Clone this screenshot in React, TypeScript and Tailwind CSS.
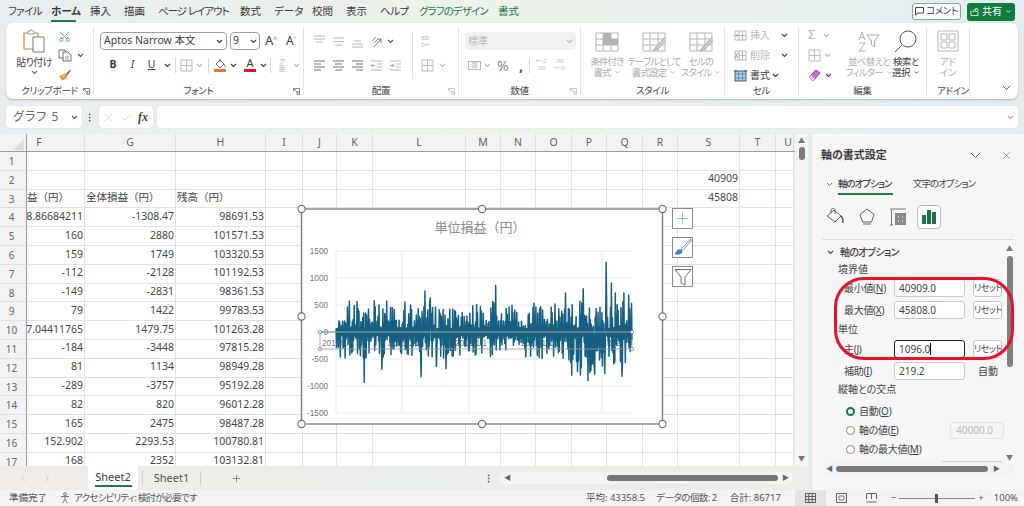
import type { ReactNode } from 'react';
import clsx from 'clsx';
import { X, Check, Plus, Scissors, MoreVertical, ChevronLeft, ChevronRight } from 'lucide-react';

const menus = [
  { label: 'ファイル', w: 'w-[29px]', t: 'tracking-[-0.6px]' },
  { label: 'ホーム', w: 'w-[25px]', active: true },
  { label: '挿入', w: 'w-[20px]' },
  { label: '描画', w: 'w-[20px]' },
  { label: 'ページ レイアウト', w: 'w-[68px]', t: 'tracking-[-1px]' },
  { label: '数式', w: 'w-[20px]' },
  { label: 'データ', w: 'w-[24px]' },
  { label: '校閲', w: 'w-[20px]' },
  { label: '表示', w: 'w-[20px]' },
  { label: 'ヘルプ', w: 'w-[25px]', t: 'tracking-[-0.5px]' },
  { label: 'グラフのデザイン', w: 'w-[65px]', green: true, t: 'tracking-[-0.9px]' },
  { label: '書式', w: 'w-[20px]', green: true },
];

const columns = [
  { k: 'F', w: 'w-[58px]' },
  { k: 'G', w: 'w-[91px]' },
  { k: 'H', w: 'w-[90px]' },
  { k: 'I', w: 'w-[37px]' },
  { k: 'J', w: 'w-[34px]' },
  { k: 'K', w: 'w-[36px]' },
  { k: 'L', w: 'w-[93px]' },
  { k: 'M', w: 'w-[35px]' },
  { k: 'N', w: 'w-[35px]' },
  { k: 'O', w: 'w-[36px]' },
  { k: 'P', w: 'w-[35px]' },
  { k: 'Q', w: 'w-[36px]' },
  { k: 'R', w: 'w-[35px]' },
  { k: 'S', w: 'w-[62px]' },
  { k: 'T', w: 'w-[36px]' },
  { k: 'U', w: 'w-[18px]' },
];

const rows: Record<string, string>[] = [
  {},
  { S: '40909' },
  { F: '損益（円）', G: '全体損益（円）', H: '残高（円）', S: '45808' },
  { F: '78.86684211', G: '-1308.47', H: '98691.53' },
  { F: '160', G: '2880', H: '101571.53' },
  { F: '159', G: '1749', H: '103320.53' },
  { F: '-112', G: '-2128', H: '101192.53' },
  { F: '-149', G: '-2831', H: '98361.53' },
  { F: '79', G: '1422', H: '99783.53' },
  { F: '87.04411765', G: '1479.75', H: '101263.28' },
  { F: '-184', G: '-3448', H: '97815.28' },
  { F: '81', G: '1134', H: '98949.28' },
  { F: '-289', G: '-3757', H: '95192.28' },
  { F: '82', G: '820', H: '96012.28' },
  { F: '165', G: '2475', H: '98487.28' },
  { F: '152.902', G: '2293.53', H: '100780.81' },
  { F: '168', G: '2352', H: '103132.81' },
];

function Chev({ className }: { className?: string }) {
  return (
    <svg width="7" height="5" viewBox="0 0 7 5" className={clsx('shrink-0', className)} fill="none" stroke="currentColor" strokeWidth="1.1">
      <path d="M1 1l2.5 2.5L6 1" />
    </svg>
  );
}

function Launcher({ dim }: { dim?: boolean }) {
  return (
    <svg width="7" height="7" viewBox="0 0 7 7" fill="none" stroke={dim ? '#c4c4c4' : '#707070'} strokeWidth="0.9">
      <path d="M0.5 3V0.5H6.5V6.5H4M1 1L5 5M5 3V5H3" />
    </svg>
  );
}

function Lines({ kind, color = '#6e6e6e' }: { kind: 'left' | 'center' | 'right' | 'top' | 'mid' | 'bottom'; color?: string }) {
  const paths = {
    left: 'M1 2H12M1 5H8M1 8H12M1 11H8',
    center: 'M1 2H12M3 5H10M1 8H12M3 11H10',
    right: 'M1 2H12M5 5H12M1 8H12M5 11H12',
    top: 'M1 1H12M1 4H12M3 7H10',
    mid: 'M1 3H12M1 6.5H12M3 10H10',
    bottom: 'M3 6H10M1 9H12M1 12H12',
  };
  return (
    <svg width="13" height="13" viewBox="0 0 13 13" fill="none" stroke={color} strokeWidth="1">
      <path d={paths[kind]} />
    </svg>
  );
}

function Indent({ flip }: { flip?: boolean }) {
  return (
    <svg width="13" height="13" viewBox="0 0 13 13" fill="none" stroke="#b8b8b8" strokeWidth="1">
      <path d="M1 2H12M7 5H12M7 8H12M1 11H12" />
      <path d={flip ? 'M1 6.5H5M3.5 5L5 6.5L3.5 8' : 'M5 6.5H1M2.5 5L1 6.5L2.5 8'} stroke="#8fa8b8" />
    </svg>
  );
}

function Group({ className, label, launcher, dimLauncher, children }: { className: string; label: string; launcher?: boolean; dimLauncher?: boolean; children: ReactNode }) {
  return (
    <div className={clsx('h-[68px] shrink-0 border-r border-[#e3e3e3] flex flex-col', className)}>
      <div className="h-[57px] shrink-0 flex">{children}</div>
      <div className="h-[14px] shrink-0 grid grid-cols-[10px_1fr_10px] items-center text-[9.5px] text-[#444]">
        <span />
        <span className="text-center whitespace-nowrap tracking-[-0.3px]">{label}</span>
        {launcher && <Launcher dim={dimLauncher} />}
      </div>
    </div>
  );
}

function PasteIcon() {
  return (
    <svg width="23" height="24" viewBox="0 0 23 24" fill="none">
      <path d="M1 4H15V20H1Z" fill="#fff" stroke="#cf8a3e" strokeWidth="1.2" />
      <path d="M5 4V2H7C7.5 0.5 9 0.5 9.5 2H11V5H5Z" fill="#fff" stroke="#9a9a9a" />
      <path d="M10 8H21V23H10Z" fill="#fff" stroke="#777" />
    </svg>
  );
}

function CopyIcon() {
  return (
    <svg width="14" height="13" viewBox="0 0 14 13" fill="none" stroke="#6c6c6c">
      <path d="M1 1H7V9H1Z" />
      <path d="M5 3H10L13 6V12H5Z" fill="#fff" />
      <path d="M7 8H11M7 10H11" strokeWidth="0.7" />
    </svg>
  );
}

function BrushIcon() {
  return (
    <svg width="14" height="13" viewBox="0 0 14 13">
      <path d="M7 7L12 1.5L13 2.5L9 8Z" fill="#777" />
      <path d="M1 8C3 7.5 5 6.5 6.5 5.5L9.5 8.5C8 10.5 6 12 4 12.5Z" fill="#e29a3c" />
      <path d="M4 9L6.5 7" stroke="#fbe3a8" />
    </svg>
  );
}

function BorderGrid({ color = '#bdbdbd' }: { color?: string }) {
  return (
    <svg width="13" height="13" viewBox="0 0 13 13" fill="none" stroke={color}>
      <path d="M1 1H12V12H1ZM1 6.5H12M6.5 1V12" />
    </svg>
  );
}

function FillIcon() {
  return (
    <svg width="14" height="14" viewBox="0 0 14 14" fill="none">
      <path d="M3 6L7 2L11 6L7 10Z" stroke="#6b6b6b" />
      <path d="M7 1V4" stroke="#6b6b6b" />
      <path d="M11 6C12 8 12.5 8.5 12 9.5" stroke="#3f87c9" />
      <rect x="1" y="11" width="12" height="3" fill="#e3772e" />
    </svg>
  );
}

function GridBtn({ brush, cond }: { brush?: boolean; cond?: boolean }) {
  return (
    <svg width="24" height="20" viewBox="0 0 24 20" fill="none" stroke="#b4b4b4">
      <path d="M1 1H23V19H1ZM1 7H23M1 13H23M8 1V19M16 1V19" />
      {cond && <path d="M8 1H16V7H23V13H8Z" fill="#b4b4b4" stroke="none" />}
      {brush && <path d="M23 5L14 15L11 19L16 17L25 7" fill="#cfcfcf" stroke="#a8a8a8" />}
    </svg>
  );
}

function CellIcon({ kind }: { kind: 'ins' | 'del' | 'fmt' }) {
  if (kind === 'fmt') {
    return (
      <svg width="13" height="13" viewBox="0 0 13 13" fill="none">
        <rect x="1" y="2" width="11" height="10" fill="#a9cdea" stroke="#5d5d5d" />
        <path d="M1 5H12M1 9H12M4.5 2V12M8.5 2V12" stroke="#5d7e97" strokeWidth="0.7" />
        <path d="M0 2H3M10 2H13" stroke="#2f7bd0" strokeWidth="1.4" />
      </svg>
    );
  }
  return (
    <svg width="13" height="11" viewBox="0 0 13 11" fill="none" stroke="#b8b8b8">
      <path d="M1 1H12V10H1ZM5 1V10M8.5 1V10M5 5.5H12" />
      <path d={kind === 'ins' ? 'M0.5 5.5H4M2.5 4L4 5.5L2.5 7' : 'M1 3L4 8M4 3L1 8'} stroke="#99a9b5" />
    </svg>
  );
}

function Ribbon() {
  return (
    <div className="mx-[6px] h-[76px] rounded-[7px] bg-white shadow-[0_1px_2px_rgba(0,0,0,0.22)] pt-[4px] flex text-[#3b3b3b]">
      <Group className="w-[88px]" label="クリップボード" launcher>
        <div className="w-[52px] flex flex-col items-center pl-[4px] pt-[2px]">
          <PasteIcon />
          <span className="text-[10px] leading-[12px] mt-[3px] tracking-[-0.6px] whitespace-nowrap">貼り付け</span>
          <Chev className="mt-[2px] text-[#666]" />
        </div>
        <div className="flex flex-col gap-[6px] pt-[3px]">
          <Scissors size={13} className="text-[#4a7fb5] rotate-[-90deg]" strokeWidth={1.4} />
          <div className="flex items-center gap-[3px]">
            <CopyIcon />
            <Chev className="text-[#555] ml-[2px]" />
          </div>
          <BrushIcon />
        </div>
      </Group>

      <Group className="w-[210px]" label="フォント" launcher>
        <div className="flex flex-col pl-[6px] pt-[5px] gap-[6px]">
          <div className="flex items-center h-[18px]">
            <div className="w-[127px] h-[18px] rounded-[4px] border border-[#9d9d9d] flex items-center justify-between px-[3px] text-[10.5px]">
              <span>Aptos Narrow 本文</span>
              <Chev />
            </div>
            <div className="w-[30px] h-[18px] ml-[3px] rounded-[4px] border border-[#9d9d9d] flex items-center justify-between px-[2px] text-[10.5px]">
              <span>9</span>
              <Chev />
            </div>
            <span className="ml-[5px] w-[16px] text-[13px]">A<sup className="text-[7px] text-[#2f7bd0]">^</sup></span>
            <span className="ml-[5px] w-[16px] text-[12px]">A<sup className="text-[7px] text-[#2f7bd0]">ˇ</sup></span>
          </div>
          <div className="flex items-center h-[18px] text-[10.5px]">
            <span className="w-[20px] ml-[3px] text-center font-bold">B</span>
            <span className="w-[19px] text-center italic">I</span>
            <span className="w-[19px] text-center underline">U</span>
            <Chev className="ml-[3px]" />
            <span className="w-px h-[15px] bg-[#d8d8d8] ml-[4px]" />
            <span className="ml-[4px]"><BorderGrid /></span>
            <Chev className="ml-[3px] text-[#bbb]" />
            <span className="w-px h-[15px] bg-[#d8d8d8] ml-[5px]" />
            <span className="ml-[4px]"><FillIcon /></span>
            <Chev className="ml-[3px]" />
            <span className="ml-[6px] w-[14px] flex flex-col items-center leading-[10px] text-[11px]">
              A
              <span className="w-[12px] h-[3px] bg-[#e81123] mt-[1px]" />
            </span>
            <Chev className="ml-[3px]" />
            <span className="w-px h-[15px] bg-[#d8d8d8] ml-[3px]" />
            <span className="ml-[5px] w-[12px] text-center text-[7px] leading-[7px] text-[#bbb]">ア<br />亜</span>
            <Chev className="ml-[5px] text-[#bbb]" />
          </div>
        </div>
      </Group>

      <Group className="w-[155px]" label="配置" launcher dimLauncher>
        <div className="flex pl-[9px] pt-[5px]">
          <div className="flex flex-col gap-[6px] w-[99px]">
            <div className="flex items-center h-[18px] gap-[6px]">
              <Lines kind="top" color="#b8b8b8" />
              <Lines kind="mid" color="#b8b8b8" />
              <Lines kind="bottom" color="#b8b8b8" />
              <svg width="13" height="13" viewBox="0 0 13 13" fill="none" stroke="#9a9a9a">
                <path d="M2 6L6 2M4 8L8 4" />
                <path d="M4 12L11 4M11 8V4H7" stroke="#3f87c9" />
              </svg>
              <Chev className="-ml-[2px] text-[#555]" />
            </div>
            <div className="flex items-center h-[18px] gap-[6px]">
              <Lines kind="left" />
              <Lines kind="center" />
              <Lines kind="right" />
              <Indent />
              <Indent flip />
            </div>
          </div>
          <div className="w-px h-[47px] bg-[#e0e0e0]" />
          <div className="flex flex-col gap-[6px] pl-[8px]">
            <div className="h-[18px] text-[7px] leading-[7px] text-[#b8b8b8] pt-[2px]">ab<br />c↵</div>
            <div className="flex items-center h-[18px] gap-[5px]">
              <BorderGrid />
              <Chev className="text-[#bbb]" />
            </div>
          </div>
        </div>
      </Group>

      <Group className="w-[122px]" label="数値" launcher dimLauncher>
        <div className="flex flex-col pl-[6px] pt-[5px] gap-[6px] text-[#b8b8b8]">
          <div className="w-[111px] h-[18px] rounded-[4px] bg-[#f0f0f0] flex items-center justify-between px-[3px] text-[10px]">
            <span>標準</span>
            <Chev />
          </div>
          <div className="flex items-center h-[18px]">
            <span className="ml-[3px] w-[13px] h-[9px] border border-[#b8b8b8] text-[6px] leading-[7px] text-center">圓</span>
            <Chev className="ml-[3px]" />
            <span className="ml-[6px] text-[14px] w-[14px] text-[#888]">%</span>
            <span className="ml-[8px] text-[15px] leading-[12px] font-bold text-[#555]">,</span>
            <span className="w-px h-[15px] bg-[#d8d8d8] ml-[6px]" />
            <span className="ml-[5px] text-[6px] leading-[7px] w-[12px] text-center">←.0<br />.00</span>
            <span className="ml-[6px] text-[6px] leading-[7px] w-[12px] text-center">.00<br />→.0</span>
          </div>
        </div>
      </Group>

      <Group className="w-[144px]" label="スタイル">
        <div className="flex text-[9.5px] leading-[11px] text-[#adadad] pt-[5px] pl-[3px]">
          {[
            { t: ['条件付き', '書式'], w: 'w-[46px]', cond: true },
            { t: ['テーブルとして', '書式設定'], w: 'w-[48px]', brush: true },
            { t: ['セルの', 'スタイル'], w: 'w-[46px]', brush: true },
          ].map((b) => (
            <div key={b.t[0]} className={clsx('flex flex-col items-center', b.w)}>
              <GridBtn cond={b.cond} brush={b.brush} />
              <span className="mt-[4px] whitespace-nowrap tracking-[-0.9px]">{b.t[0]}</span>
              <span className="whitespace-nowrap tracking-[-0.9px] flex items-center gap-[3px]">{b.t[1]}<Chev className="scale-75" /></span>
            </div>
          ))}
        </div>
      </Group>

      <Group className="w-[74px]" label="セル">
        <div className="flex flex-col pl-[9px] text-[10px] gap-[4px] w-full">
          <div className="flex items-center h-[16px] text-[#b8b8b8]">
            <CellIcon kind="ins" />
            <span className="ml-[3px]">挿入</span>
            <Chev className="ml-[11px] text-[#444]" />
          </div>
          <div className="flex items-center h-[16px] text-[#b8b8b8]">
            <CellIcon kind="del" />
            <span className="ml-[3px]">削除</span>
            <Chev className="ml-[11px] text-[#444]" />
          </div>
          <div className="flex items-center h-[16px]">
            <CellIcon kind="fmt" />
            <span className="ml-[3px]">書式</span>
            <Chev className="ml-[2px]" />
          </div>
        </div>
      </Group>

      <Group className="w-[128px]" label="編集">
        <div className="flex">
          <div className="w-[47px] pl-[9px] flex flex-col gap-[4px]">
            <div className="flex items-center h-[16px] text-[#b8b8b8] text-[13px]">Σ<Chev className="ml-[8px]" /></div>
            <div className="flex items-center h-[16px] text-[#b8b8b8]"><BorderGrid /><Chev className="ml-[3px]" /></div>
            <div className="flex items-center h-[16px]">
              <svg width="13" height="13" viewBox="0 0 13 13">
                <path d="M1 8L8 1L12 4L5 12Z" fill="#c86fd0" stroke="#9a3fa5" />
                <path d="M1 8L5 12L7 10L3 6Z" fill="#f0d0f4" />
              </svg>
              <Chev className="ml-[4px]" />
            </div>
          </div>
          <div className="w-[46px] flex flex-col items-center text-[9.5px] leading-[11px] text-[#adadad] pt-[3px]">
            <svg width="22" height="22" viewBox="0 0 22 22" fill="none" stroke="#a9a9a9">
              <path d="M1 10L4 2L7 10M2 7.5H6M1.5 13H7L1.5 21H7.5" strokeWidth="0.9" />
              <path d="M9 5H21L16.5 11V17L13.5 15V11Z" />
            </svg>
            <span className="mt-[4px] whitespace-nowrap tracking-[-0.7px]">並べ替えと</span>
            <span className="whitespace-nowrap tracking-[-0.9px] flex items-center gap-[3px]">フィルター<Chev className="scale-75" /></span>
          </div>
          <div className="w-[28px] flex flex-col items-center text-[9.5px] leading-[11px] pt-[3px]">
            <svg width="24" height="23" viewBox="0 0 24 23" fill="none" stroke="#555" className="shrink-0">
              <circle cx="14" cy="9" r="8" />
              <path d="M8 15L1 22" />
            </svg>
            <span className="mt-[3px] whitespace-nowrap tracking-[-0.5px]">検索と</span>
            <span className="whitespace-nowrap tracking-[-0.5px] flex items-center gap-[3px]">選択<Chev className="scale-75" /></span>
          </div>
        </div>
      </Group>

      <Group className="w-[43px]" label="アドイン">
        <div className="w-full flex flex-col items-center text-[9.5px] leading-[11px] text-[#adadad] pt-[3px]">
          <svg width="22" height="22" viewBox="0 0 22 22" fill="none" stroke="#b8b8b8" className="shrink-0">
            <path d="M1 1H21V21H1Z" />
            <path d="M4 4H10V10H4ZM12 4H18V10H12ZM4 12H10V18H4ZM12 12H18V18H12Z" />
          </svg>
          <span className="mt-[4px]">アド</span>
          <span>イン</span>
        </div>
      </Group>

      <div className="flex-1 flex items-end justify-end pr-[7px] pb-[8px] text-[#555]">
        <svg width="9" height="6" viewBox="0 0 9 6" fill="none" stroke="currentColor"><path d="M1 1L4.5 4.5L8 1" /></svg>
      </div>
    </div>
  );
}

// 単位損益のデータはシード付き乱数で作る
function makeSeries() {
  let seed = 20120101;
  const rnd = () => {
    seed = (seed + 0x6d2b79f5) | 0;
    let t = Math.imul(seed ^ (seed >>> 15), 1 | seed);
    t = (t + Math.imul(t ^ (t >>> 7), 61 | t)) ^ t;
    return ((t ^ (t >>> 14)) >>> 0) / 4294967296;
  };
  const n = 620;
  const spikes: Record<number, number> = {
    59: -930, 96: -690, 178: -830, 186: 760, 197: 630, 210: -640, 230: -680, 334: 860, 480: 720, 493: -800, 517: 800, 527: -900,
    562: -770, 565: 1290, 576: 910, 598: -820, 602: 720, 19: -480, 540: -650, 505: -730,
  };
  const pts: string[] = [];
  for (let i = 0; i < n; i++) {
    const t = i / (n - 1);
    const wide = t > 0.76 && t < 0.9 ? 1.8 : t > 0.93 ? 1.5 : 1;
    const up = (t < 0.03 ? 170 : 520) * (t > 0.93 ? 1.3 : 1);
    const down = 430 * wide;
    const r = Math.pow(rnd(), 1.9);
    const v = spikes[i] ?? (i % 2 === 0 ? up * r + 60 : -down * r - 60);
    pts.push(`${(336 + t * 296).toFixed(1)},${(332 - v * 0.054).toFixed(1)}`);
  }
  return pts.join(' ');
}

const series = makeSeries();

function Chart() {
  const hs = [1500, 1000, 500, 0, -500, -1000, -1500];
  const vs = [336, 402, 469, 535, 602];
  const xl = ['2012/1/1', '2015/1/1', '2018/1/1', '2021/1/1', '2024/1/2'];
  const handles = [
    [301.5, 209], [482, 209], [662.5, 209], [301.5, 316.5], [662.5, 316.5], [301.5, 424], [482, 424], [662.5, 424],
  ];
  return (
    <svg width="700" height="300" viewBox="290 200 400 230" className="absolute left-[290px] top-[66px] w-[400px] h-[230px]">
      <rect x="301.5" y="209" width="361" height="215" fill="#fff" stroke="#7f7f7f" strokeWidth="1.4" />
      <text x="480" y="232" textAnchor="middle" fontSize="13" fill="#8a8a8a" fontFamily="'Noto Sans CJK JP', sans-serif" className="[font-feature-settings:normal]">単位損益（円）</text>
      {hs.map((v) => (
        <g key={v}>
          <line x1="336" x2="632" y1={332 - v * 0.054} y2={332 - v * 0.054} stroke="#e4e4e4" strokeWidth="0.8" />
          <text x="328" y={335 - v * 0.054} textAnchor="end" fontSize="8.2" fill="#777" fontFamily="'Liberation Sans', sans-serif">{v}</text>
        </g>
      ))}
      {vs.map((x) => (
        <line key={x} x1={x} x2={x} y1="251" y2="413" stroke="#e4e4e4" strokeWidth="0.8" />
      ))}
      {xl.map((t, i) => (
        <text key={t} x={vs[i] + 2} y="346" textAnchor="middle" fontSize="8.2" fill="#777" fontFamily="'Liberation Sans', sans-serif">{t}</text>
      ))}
      <polyline points={series} fill="none" stroke="#156082" strokeWidth="1.5" strokeLinejoin="round" />
      <line x1="320" x2="632" y1="332" y2="332" stroke="#858585" strokeWidth="0.9" />
      <rect x="320" y="332" width="312" height="17" fill="none" stroke="#9a9a9a" strokeWidth="0.8" />
      {[[320, 332], [632, 332], [320, 349], [632, 349]].map(([x, y]) => (
        <circle key={`${x}-${y}`} cx={x} cy={y} r="1.6" fill="#fff" stroke="#3f87c9" strokeWidth="0.8" />
      ))}
      {handles.map(([x, y]) => (
        <circle key={`${x}-${y}`} cx={x} cy={y} r="3.6" fill="#fff" stroke="#6e6e6e" strokeWidth="1.1" />
      ))}
    </svg>
  );
}

function ChartButtons() {
  return (
    <div className="absolute left-[672px] top-[74px] flex flex-col gap-[8px]">
      <div className="w-[21px] h-[21px] border border-[#8a8a8a] bg-white flex items-center justify-center">
        <Plus size={19} strokeWidth={0.9} className="text-[#5cb578]" />
      </div>
      <div className="w-[21px] h-[21px] border border-[#8a8a8a] bg-white flex items-center justify-center">
        <svg width="19" height="19" viewBox="0 0 19 19" fill="none">
          <path d="M18 1L9 10L7.5 13L10.5 11.5L18 3Z" fill="#fff" stroke="#777" strokeWidth="0.8" />
          <path d="M7 11C4 11 4 14 1 16C4 17.5 9 17 9.5 13Z" fill="#3f87c9" />
        </svg>
      </div>
      <div className="w-[21px] h-[21px] border border-[#8a8a8a] bg-white flex items-center justify-center">
        <svg width="18" height="18" viewBox="0 0 18 18" fill="none" stroke="#6e6e6e">
          <path d="M1 1.5H17L11 9V17L7 15V9Z" />
        </svg>
      </div>
    </div>
  );
}

function Sheet() {
  return (
    <div className="relative flex-1 min-h-0 overflow-hidden flex">
      <div className="w-[795px] shrink-0 flex flex-col">
        <div className="flex h-[18px] shrink-0 bg-[#f2f2f2] border-b border-[#9c9c9c] text-[10.5px] text-[#666]">
          <div className="w-[27px] shrink-0 border-r border-[#9c9c9c] flex items-end justify-end pr-[2px] pb-[1px]">
            <span className="w-0 h-0 border-l-[11px] border-l-transparent border-b-[11px] border-b-[#dcdcdc]" />
          </div>
          {columns.map((c) => (
            <div
              key={c.k}
              className={clsx('shrink-0 border-r border-[#dedede] flex items-center justify-center', c.w, c.k === 'F' && 'pr-[33px]', c.k === 'U' && 'justify-end pr-[1px]')}
            >
              {c.k}
            </div>
          ))}
        </div>
        <div className="relative">
          {rows.map((row, i) => (
            <div key={i} className="flex h-[18.8px]">
              <div className="w-[27px] shrink-0 bg-[#f2f2f2] border-r border-[#9c9c9c] border-b border-b-[#dedede] text-[10px] text-[#666] text-center pr-[3px] leading-[18px]">
                {i + 1}
              </div>
              {columns.map((c) => {
                const val = row[c.k];
                const isText = i === 2;
                return (
                  <div
                    key={c.k}
                    className={clsx(
                      'shrink-0 bg-white border-r border-b border-[#e3e3e3] flex items-center overflow-hidden whitespace-nowrap text-[10.5px] text-[#444] pb-[1px] [font-feature-settings:normal]',
                      c.w,
                      isText && c.k !== 'F' && c.k !== 'S' ? 'justify-start pl-[1px]' : 'justify-end pr-[1px]',
                      isText && c.k === 'F' && 'pr-[15px]',
                    )}
                  >
                    {val}
                  </div>
                );
              })}
            </div>
          ))}
        </div>
      </div>
      <div className="w-[13px] shrink-0 bg-[#f5f5f5] flex flex-col items-center justify-between py-[3px] text-[#777] text-[7px] leading-[8px]">
        <div className="flex flex-col items-center">
          <span>▲</span>
          <span className="w-[6px] h-[13px] mt-[2px] rounded-full bg-[#7a7a7a]" />
        </div>
        <span>▼</span>
      </div>
      <Chart />
      <ChartButtons />
    </div>
  );
}

function Tabs() {
  return (
    <div className="h-[24px] shrink-0 flex items-center text-[11px] text-[#555] bg-gradient-to-r from-[#f0ebe6] via-[#e9edea] to-[#eeece6]">
      <span className="w-[88px] shrink-0 flex justify-start pl-[17px] gap-[12px] text-[#aaa]">
        <ChevronLeft size={12} strokeWidth={1.3} />
        <ChevronRight size={12} strokeWidth={1.3} />
      </span>
      <div className="w-[50px] h-[24px] bg-white rounded-b-[3px] text-[#3b3b3b] text-center relative pt-[3px]">
        Sheet2
        <span className="absolute left-[7px] right-[6px] top-[19px] h-[2px] bg-[#217a4a]" />
      </div>
      <span className="w-px h-[14px] bg-[#ccc] ml-[4px]" />
      <span className="w-[57px] text-center">Sheet1</span>
      <span className="w-px h-[14px] bg-[#ccc]" />
      <Plus size={11} className="ml-[30px]" strokeWidth={1.3} />
      <MoreVertical size={11} className="ml-[241px]" strokeWidth={1.8} />
      <div className="ml-[6px] w-[293px] h-[12px] rounded-full bg-[#f3f3f3] flex items-center justify-between px-[4px] text-[7px] text-[#666]">
        <span>◀</span>
        <span className="w-[171px] h-[6px] ml-[92px] rounded-full bg-[#757575]" />
        <span>▶</span>
      </div>
    </div>
  );
}

function PanelIcons() {
  return (
    <div className="flex items-center h-[25px] mt-[10px] pl-[14px]">
      <svg width="19" height="19" viewBox="0 0 19 19" fill="none" stroke="#5f5f5f">
        <path d="M1 9L8 3L15 9L9 15Z" />
        <path d="M5 6V3C5 1 9 1 9 3V7" />
        <path d="M15 9C17 11 17.5 13 16.5 16" stroke="#555" strokeWidth="1.6" />
      </svg>
      <svg width="18" height="18" viewBox="0 0 18 18" fill="none" stroke="#5f5f5f" className="ml-[13px]">
        <path d="M9 1L16 6.5L13.5 14H4.5L2 6.5Z" />
        <path d="M5 16H13" strokeWidth="1.5" stroke="#999" />
      </svg>
      <svg width="18" height="18" viewBox="0 0 18 18" fill="none" stroke="#777" className="ml-[13px]">
        <path d="M1 1H17M1 17H4M2.5 1V17" />
        <rect x="6" y="5" width="11" height="12" fill="#8a8a8a" stroke="none" />
        <path d="M9 9H10M13 9H14M9 13H10M13 13H14" stroke="#fff" />
      </svg>
      <div className="ml-[10px] w-[24px] h-[24px] rounded-[4px] bg-white border border-[#bdbdbd] flex items-end justify-center gap-[1px] pb-[4px]">
        <span className="w-[4px] h-[9px] bg-[#217346]" />
        <span className="w-[4px] h-[14px] bg-[#217346]" />
        <span className="w-[4px] h-[12px] bg-[#217346]" />
      </div>
    </div>
  );
}

function FieldRow({ label, value, reset, focus, after }: { label: ReactNode; value: string; reset?: boolean; focus?: boolean; after?: string }) {
  return (
    <div className="flex items-center h-[18px]">
      <span className="w-[50px] text-[10px] tracking-[-0.3px] whitespace-nowrap">{label}</span>
      <div className={clsx('w-[71px] h-[18px] rounded-[3px] bg-white px-[4px] flex items-center text-[10px]', focus ? 'border-[1.5px] border-[#222]' : 'border border-[#c9c9c9]')}>
        {value}
        {focus && <span className="w-px h-[12px] bg-black" />}
      </div>
      {reset && <span className="ml-[8px] w-[29px] h-[18px] shrink-0 rounded-[3px] bg-white border border-[#c9c9c9] text-center text-[9px] tracking-[-0.6px] leading-[16px] whitespace-nowrap">リセット</span>}
      {after && <span className="ml-[13px] text-[10px]">{after}</span>}
    </div>
  );
}

function Radio({ on, label, u }: { on?: boolean; label: string; u: string }) {
  return (
    <div className="flex items-center h-[19px] pl-[34px] text-[10px] tracking-[-0.3px]">
      <span className={clsx('w-[9px] h-[9px] rounded-full bg-white', on ? 'border-[2.5px] border-[#107c41]' : 'border border-[#888]')} />
      <span className="ml-[4px]">{label}(<u>{u}</u>)</span>
    </div>
  );
}

function Panel() {
  return (
    <div className="relative w-[213px] ml-[3px] shrink-0 bg-[#f6f6f6] border-l border-[#e0e0e0] text-[#444] flex flex-col overflow-hidden">
      <div className="flex items-center h-[20px] mt-[11px] pl-[9px] pr-[12px]">
        <span className="text-[11px] font-bold text-[#3b3b3b]">軸の書式設定</span>
        <svg width="11" height="7" viewBox="0 0 11 7" fill="none" stroke="#666" className="ml-auto mr-[20px]"><path d="M1 1L5.5 5.5L10 1" /></svg>
        <X size={11} className="text-[#666]" strokeWidth={1.4} />
      </div>
      <div className="flex h-[20px] mt-[9px] pl-[14px] text-[9.5px] tracking-[-1px] items-center">
        <svg width="7" height="5" viewBox="0 0 7 5" fill="none" stroke="#3f87c9" className="mr-[5px]"><path d="M1 1l2.5 2.5L6 1" /></svg>
        <span className="relative w-[55px] whitespace-nowrap font-medium">
          軸のオプション
          <span className="absolute left-0 right-0 top-[16px] h-[2px] bg-[#217a4a]" />
        </span>
        <span className="ml-[20px] whitespace-nowrap">文字のオプション</span>
      </div>
      <PanelIcons />
      <div className="mx-[10px] mt-[10px] h-px bg-[#dcdcdc]" />
      <div className="flex-1 min-h-0 flex">
        <div className="w-[192px] shrink-0 overflow-hidden">
          <div className="flex items-center h-[18px] mt-[3px] pl-[15px] text-[10px] font-medium tracking-[-0.7px]">
            <Chev className="mr-[6px]" />
            軸のオプション
          </div>
          <div className="pl-[26px] h-[17px] text-[10px] leading-[17px]">境界値</div>
          <div className="flex flex-col gap-[4px] pl-[32px] mt-[1px]">
            <FieldRow label={<>最小値(<u>N</u>)</>} value="40909.0" reset />
            <FieldRow label={<>最大値(<u>X</u>)</>} value="45808.0" reset />
          </div>
          <div className="pl-[26px] h-[21px] text-[10px] leading-[20px]">単位</div>
          <div className="flex flex-col gap-[4px] pl-[32px]">
            <FieldRow label={<>主(<u>J</u>)</>} value="1096.0" reset focus />
            <FieldRow label={<>補助(<u>I</u>)</>} value="219.2" after="自動" />
          </div>
          <div className="pl-[26px] h-[19px] text-[10px] leading-[19px]">縦軸との交点</div>
          <div className="mt-[3px]">
            <Radio on label="自動" u="O" />
            <div className="relative">
              <Radio label="軸の値" u="E" />
              <span className="absolute left-[138px] top-[1px] w-[54px] h-[17px] bg-[#f4f4f4] border border-[#e2e2e2] rounded-[3px] text-[10px] text-[#bbb] pl-[5px] leading-[15px]">40000.0</span>
            </div>
            <Radio label="軸の最大値" u="M" />
            <div className="ml-[128px] mt-[2px] w-[64px] h-[8px] rounded-t-[3px] border border-[#d0d0d0] bg-white" />
          </div>
        </div>
        <div className="w-[11px] shrink-0 flex flex-col items-center text-[7px] leading-[8px] text-[#777] pt-[5px] justify-between">
          <div className="flex flex-col items-center">
            <span>▲</span>
            <span className="w-[6px] h-[111px] mt-[3px] rounded-full bg-[#7f7f7f]" />
          </div>
          <span>▼</span>
        </div>
      </div>
      <div className="h-[14px] mb-[14px] mx-[11px] shrink-0 rounded-full bg-[#f2f2f2] flex items-center pl-[3px] text-[7px] text-[#666]">
        <span>◀</span>
        <span className="ml-[3px] w-[152px] h-[6px] rounded-full bg-[#7a7a7a]" />
        <span className="ml-[5px]">▶</span>
      </div>
      <div className="absolute left-[22px] top-[143px] w-[180px] h-[83px] rounded-[30px] border-[3px] border-[#e8112a]" />
    </div>
  );
}

function StatusBar() {
  return (
    <div className="h-[16px] shrink-0 bg-[#f3f3f3] flex items-center text-[9.5px] text-[#555]">
      <span className="ml-[9px]">準備完了</span>
      <svg width="11" height="12" viewBox="0 0 11 12" fill="none" stroke="#666" strokeWidth="0.9" className="ml-[13px]">
        <circle cx="5" cy="2.2" r="1.4" />
        <path d="M1 4.5H9M5 4.5V7.5M5 7.5L2.5 11M5 7.5L7.5 11" />
      </svg>
      <span className="ml-[3px] whitespace-nowrap tracking-[-0.8px]">アクセシビリティ: 検討が必要です</span>
      <span className="ml-auto whitespace-nowrap">平均: 43358.5</span>
      <span className="ml-[11px] whitespace-nowrap tracking-[-0.5px]">データの個数: 2</span>
      <span className="ml-[13px] whitespace-nowrap">合計: 86717</span>
      <div className="ml-[14px] w-[31px] h-[16px] bg-[#e2e2e2] flex items-center justify-center">
        <svg width="11" height="10" viewBox="0 0 11 10" fill="none" stroke="#555" strokeWidth="0.9">
          <path d="M0.5 0.5H10.5V9.5H0.5ZM0.5 3.5H10.5M0.5 6.5H10.5M3.8 0.5V9.5M7.2 0.5V9.5" />
        </svg>
      </div>
      <svg width="11" height="10" viewBox="0 0 11 10" fill="none" stroke="#666" className="ml-[10px]">
        <path d="M0.5 0.5H10.5V9.5H0.5Z" />
        <path d="M3 3H8V7H3Z" strokeWidth="0.8" />
      </svg>
      <svg width="11" height="10" viewBox="0 0 11 10" fill="none" stroke="#666" className="ml-[19px]">
        <path d="M0.5 6V0.5H10.5V6M0.5 9H10.5M5.5 0.5V6" />
      </svg>
      <span className="ml-[14px]">−</span>
      <div className="ml-[3px] relative w-[76px] h-px bg-[#888]">
        <span className="absolute left-[36px] -top-[4px] w-[3px] h-[9px] bg-[#555]" />
      </div>
      <span className="ml-[3px]">+</span>
      <span className="ml-[10px] mr-[6px]">100%</span>
    </div>
  );
}

export default function App() {
  return (
    <div className="w-[1024px] h-[506px] overflow-hidden flex flex-col bg-gradient-to-r from-[#e8ecee] via-[#ecf1ea] to-[#e2ecef] font-['Noto_Sans','Noto_Sans_CJK_JP',sans-serif] [font-feature-settings:'palt'] text-[#3b3b3b]">
      <div className="h-[23px] shrink-0 flex items-center">
        <div className="flex items-center gap-[14px] pl-[8px] text-[10.5px]">
          {menus.map((m) => (
            <span key={m.label} className={clsx('relative whitespace-nowrap text-center', m.w, m.t, m.active && 'font-bold', m.green && 'text-[#217a4a]')}>
              {m.label}
              {m.active && <span className="absolute left-0 right-0 top-[16px] h-[2px] bg-[#217a4a]" />}
            </span>
          ))}
        </div>
        <div className="ml-auto flex items-center gap-[6px] pr-[9px]">
          <div className="w-[49px] h-[17px] rounded-[3px] bg-white border border-[#9b9b9b] flex items-center justify-center gap-[2px] text-[9.5px] tracking-[-0.4px]">
            <svg width="9" height="9" viewBox="0 0 9 9" fill="none" stroke="#444"><path d="M0.5 0.5H8.5V6H3L0.5 8Z" /></svg>
            コメント
          </div>
          <div className="w-[48px] h-[18px] rounded-[3px] bg-[#107c41] text-white flex items-center justify-center gap-[3px] text-[10px]">
            <svg width="9" height="9" viewBox="0 0 9 9" fill="none" stroke="#fff" strokeWidth="0.8"><path d="M1 3.5V8.5H8V5M3 5C3.5 3 5 2.5 6 2.5V1L8.5 3L6 5V3.8C5 3.8 4 4 3 5Z" /></svg>
            共有
            <Chev className="scale-75" />
          </div>
        </div>
      </div>

      <Ribbon />

      <div className="h-[22px] shrink-0 mt-[7px] mx-[6px] flex items-stretch">
        <div className="w-[76px] rounded-[4px] bg-white flex items-center justify-between pl-[7px] pr-[4px] text-[12px] text-[#666] shadow-[0_0_1px_rgba(0,0,0,0.2)]">
          <span className="tracking-[1px]">グラフ 5</span>
          <Chev className="text-[#555]" />
        </div>
        <MoreVertical size={11} strokeWidth={1.8} className="self-center ml-[2px] text-[#555]" />
        <div className="ml-[4px] w-[54px] rounded-[4px] bg-white flex items-center pl-[3px] gap-[5px] text-[#c0c0c0] shadow-[0_0_1px_rgba(0,0,0,0.2)]">
          <X size={13} strokeWidth={1.1} />
          <Check size={13} strokeWidth={1.1} />
          <span className="font-['Liberation_Serif',serif] italic font-bold text-[12px] text-[#444]">fx</span>
        </div>
        <div className="ml-[4px] flex-1 rounded-[4px] bg-white flex items-center justify-end pr-[4px] text-[#aaa] shadow-[0_0_1px_rgba(0,0,0,0.2)]">
          <Chev />
        </div>
      </div>

      <div className="mt-[6px] flex-1 min-h-0 flex">
        <div className="w-[808px] shrink-0 flex flex-col min-h-0">
          <Sheet />
          <Tabs />
        </div>
        <Panel />
      </div>

      <StatusBar />
    </div>
  );
}
